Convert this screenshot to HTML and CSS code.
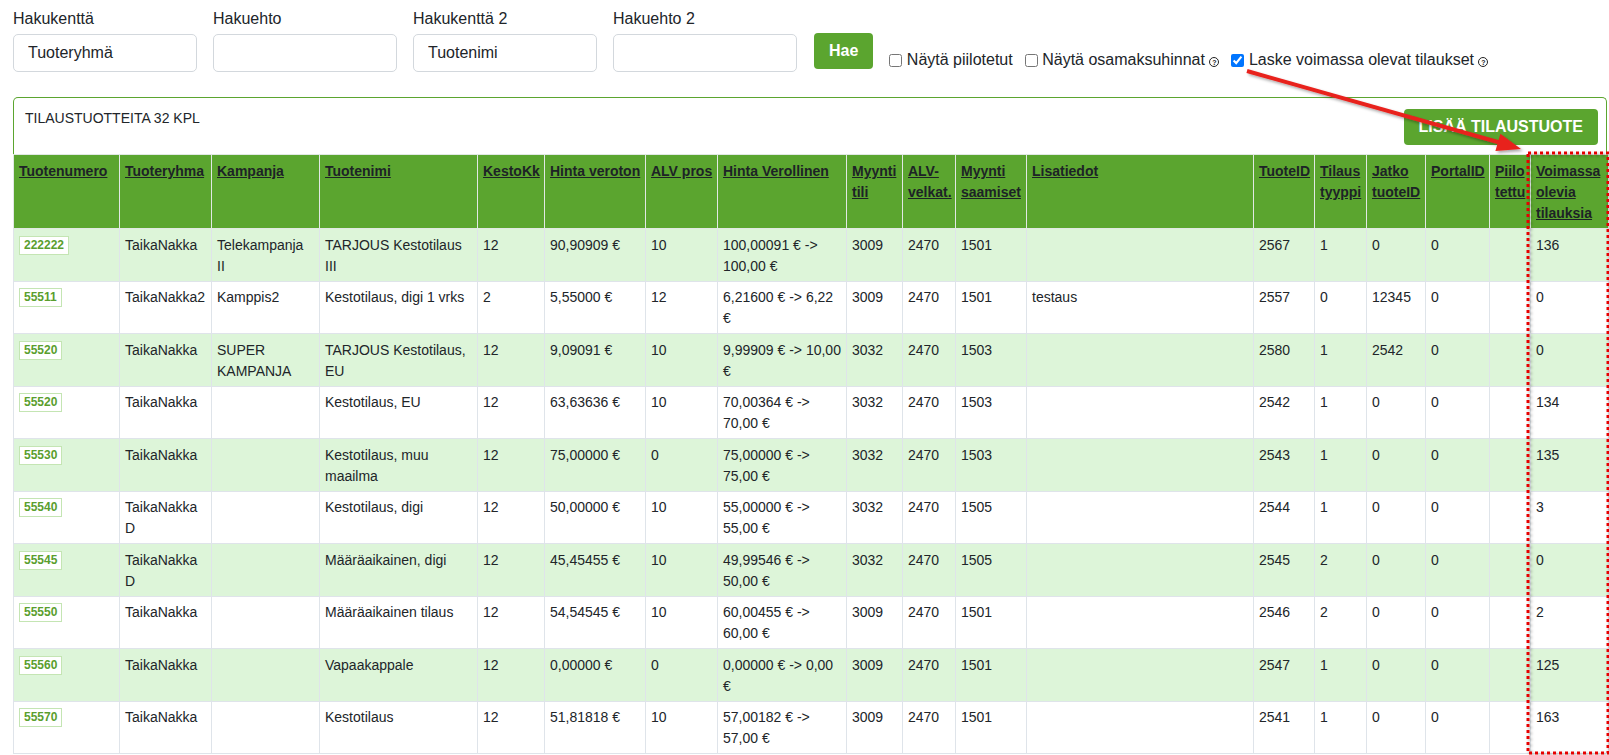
FILE: index.html
```html
<!DOCTYPE html>
<html lang="fi">
<head>
<meta charset="utf-8">
<title>Tilaustuotteet</title>
<link rel="stylesheet" href="styles.css">
</head>
<body>
<div class="page">
  <form class="search">
    <div class="field"><label>Hakukenttä</label><input type="text" value="Tuoteryhmä"></div>
    <div class="field"><label>Hakuehto</label><input type="text" value=""></div>
    <div class="field"><label>Hakukenttä 2</label><input type="text" value="Tuotenimi"></div>
    <div class="field"><label>Hakuehto 2</label><input type="text" value=""></div>
    <button type="button" class="btn btn-hae">Hae</button>
    <div class="checks">
      <label class="chk"><input type="checkbox">Näytä piilotetut</label>
      <label class="chk"><input type="checkbox">Näytä osamaksuhinnat<span class="help">?</span></label>
      <label class="chk"><input type="checkbox" checked>Laske voimassa olevat tilaukset<span class="help">?</span></label>
    </div>
  </form>

  <div class="panel">
    <div class="panel-head">
      <span class="count">TILAUSTUOTTEITA 32 KPL</span>
      <button type="button" class="btn btn-add">LISÄÄ TILAUSTUOTE</button>
    </div>
    <table class="grid">
      <colgroup>
        <col style="width:106px"><col style="width:92px"><col style="width:108px"><col style="width:158px">
        <col style="width:67px"><col style="width:101px"><col style="width:72px"><col style="width:129px">
        <col style="width:56px"><col style="width:53px"><col style="width:71px"><col style="width:227px">
        <col style="width:61px"><col style="width:52px"><col style="width:59px"><col style="width:64px">
        <col style="width:41px"><col style="width:78px">
      </colgroup>
      <thead>
        <tr>
          <th><a href="#">Tuotenumero</a></th>
          <th><a href="#">Tuoteryhma</a></th>
          <th><a href="#">Kampanja</a></th>
          <th><a href="#">Tuotenimi</a></th>
          <th><a href="#">KestoKk</a></th>
          <th><a href="#">Hinta veroton</a></th>
          <th><a href="#">ALV pros</a></th>
          <th><a href="#">Hinta Verollinen</a></th>
          <th><a href="#">Myynti<br>tili</a></th>
          <th><a href="#">ALV-<br>velkat.</a></th>
          <th><a href="#">Myynti<br>saamiset</a></th>
          <th><a href="#">Lisatiedot</a></th>
          <th><a href="#">TuoteID</a></th>
          <th><a href="#">Tilaus<br>tyyppi</a></th>
          <th><a href="#">Jatko<br>tuoteID</a></th>
          <th><a href="#">PortalID</a></th>
          <th><a href="#">Piilo<br>tettu</a></th>
          <th><a href="#">Voimassa<br>olevia<br>tilauksia</a></th>
        </tr>
      </thead>
      <tbody>
        <tr class="alt">
          <td><a class="tn" href="#">222222</a></td><td>TaikaNakka</td><td>Telekampanja II</td><td>TARJOUS Kestotilaus III</td>
          <td>12</td><td>90,90909 €</td><td>10</td><td>100,00091 € -> 100,00 €</td>
          <td>3009</td><td>2470</td><td>1501</td><td></td><td>2567</td><td>1</td><td>0</td><td>0</td><td></td><td>136</td>
        </tr>
        <tr>
          <td><a class="tn" href="#">55511</a></td><td>TaikaNakka2</td><td>Kamppis2</td><td>Kestotilaus, digi 1 vrks</td>
          <td>2</td><td>5,55000 €</td><td>12</td><td>6,21600 € -> 6,22 €</td>
          <td>3009</td><td>2470</td><td>1501</td><td>testaus</td><td>2557</td><td>0</td><td>12345</td><td>0</td><td></td><td>0</td>
        </tr>
        <tr class="alt">
          <td><a class="tn" href="#">55520</a></td><td>TaikaNakka</td><td>SUPER KAMPANJA</td><td>TARJOUS Kestotilaus, EU</td>
          <td>12</td><td>9,09091 €</td><td>10</td><td>9,99909 € -> 10,00 €</td>
          <td>3032</td><td>2470</td><td>1503</td><td></td><td>2580</td><td>1</td><td>2542</td><td>0</td><td></td><td>0</td>
        </tr>
        <tr>
          <td><a class="tn" href="#">55520</a></td><td>TaikaNakka</td><td></td><td>Kestotilaus, EU</td>
          <td>12</td><td>63,63636 €</td><td>10</td><td>70,00364 € -> 70,00 €</td>
          <td>3032</td><td>2470</td><td>1503</td><td></td><td>2542</td><td>1</td><td>0</td><td>0</td><td></td><td>134</td>
        </tr>
        <tr class="alt">
          <td><a class="tn" href="#">55530</a></td><td>TaikaNakka</td><td></td><td>Kestotilaus, muu maailma</td>
          <td>12</td><td>75,00000 €</td><td>0</td><td>75,00000 € -> 75,00 €</td>
          <td>3032</td><td>2470</td><td>1503</td><td></td><td>2543</td><td>1</td><td>0</td><td>0</td><td></td><td>135</td>
        </tr>
        <tr>
          <td><a class="tn" href="#">55540</a></td><td>TaikaNakka D</td><td></td><td>Kestotilaus, digi</td>
          <td>12</td><td>50,00000 €</td><td>10</td><td>55,00000 € -> 55,00 €</td>
          <td>3032</td><td>2470</td><td>1505</td><td></td><td>2544</td><td>1</td><td>0</td><td>0</td><td></td><td>3</td>
        </tr>
        <tr class="alt">
          <td><a class="tn" href="#">55545</a></td><td>TaikaNakka D</td><td></td><td>Määräaikainen, digi</td>
          <td>12</td><td>45,45455 €</td><td>10</td><td>49,99546 € -> 50,00 €</td>
          <td>3032</td><td>2470</td><td>1505</td><td></td><td>2545</td><td>2</td><td>0</td><td>0</td><td></td><td>0</td>
        </tr>
        <tr>
          <td><a class="tn" href="#">55550</a></td><td>TaikaNakka</td><td></td><td>Määräaikainen tilaus</td>
          <td>12</td><td>54,54545 €</td><td>10</td><td>60,00455 € -> 60,00 €</td>
          <td>3009</td><td>2470</td><td>1501</td><td></td><td>2546</td><td>2</td><td>0</td><td>0</td><td></td><td>2</td>
        </tr>
        <tr class="alt">
          <td><a class="tn" href="#">55560</a></td><td>TaikaNakka</td><td></td><td>Vapaakappale</td>
          <td>12</td><td>0,00000 €</td><td>0</td><td>0,00000 € -> 0,00 €</td>
          <td>3009</td><td>2470</td><td>1501</td><td></td><td>2547</td><td>1</td><td>0</td><td>0</td><td></td><td>125</td>
        </tr>
        <tr>
          <td><a class="tn" href="#">55570</a></td><td>TaikaNakka</td><td></td><td>Kestotilaus</td>
          <td>12</td><td>51,81818 €</td><td>10</td><td>57,00182 € -> 57,00 €</td>
          <td>3009</td><td>2470</td><td>1501</td><td></td><td>2541</td><td>1</td><td>0</td><td>0</td><td></td><td>163</td>
        </tr>
      </tbody>
    </table>
  </div>

  <svg class="annot" width="1609" height="755" viewBox="0 0 1609 755" aria-hidden="true">
    <defs>
      <filter id="sh" x="-10%" y="-10%" width="120%" height="120%">
        <feDropShadow dx="2" dy="2" stdDeviation="1.5" flood-color="#000" flood-opacity="0.35"/>
      </filter>
    </defs>
    <g filter="url(#sh)">
      <line x1="1247" y1="71" x2="1503" y2="143.5" stroke="#e8201c" stroke-width="4"/>
      <polygon points="1521,149 1495.4,151.1 1500.4,133.8" fill="#e8201c"/>
      <rect x="1528" y="153" width="80" height="600" fill="none" stroke="#e60000" stroke-width="3" stroke-dasharray="3 3"/>
    </g>
  </svg>
</div>
</body>
</html>
```

FILE: styles.css
```css
html, body {
  margin: 0;
  padding: 0;
  overflow: hidden;
  background: #fff;
}

body {
  font-family: "Liberation Sans", Arial, sans-serif;
  font-size: 16px;
  color: #212529;
}

.page {
  position: relative;
  box-sizing: border-box;
  width: 1609px;
  height: 755px;
  padding: 7px 2px 0 13px;
}

/* search form */
.search {
  display: flex;
  align-items: flex-start;
}

.field {
  width: 184px;
  margin-right: 16px;
}

.field label {
  display: block;
  line-height: 24px;
  margin-bottom: 3px;
}

.field input {
  box-sizing: border-box;
  width: 184px;
  height: 38px;
  margin: 0;
  padding: 0 14px;
  border: 1px solid #d3d8dd;
  border-radius: 5px;
  font: 16px "Liberation Sans", Arial, sans-serif;
  color: #212529;
  background: #fff;
}

.btn {
  border: 0;
  color: #fff;
  background: #5ba52f;
  font-family: "Liberation Sans", Arial, sans-serif;
  font-weight: bold;
  cursor: pointer;
}

.btn-hae {
  height: 36px;
  margin: 26px 0 0 1px;
  padding: 0 15px;
  border-radius: 4px;
  font-size: 16px;
}

.checks {
  display: flex;
  align-items: center;
  margin: 41px 0 0 12px;
  line-height: 24px;
}

.chk {
  display: inline-flex;
  align-items: center;
  margin-right: 8px;
}

.chk input {
  width: 13px;
  height: 13px;
  margin: 0 4.5px 0 4px;
}

.help {
  display: inline-flex;
  align-items: center;
  justify-content: center;
  box-sizing: border-box;
  width: 10px;
  height: 10px;
  margin: 4px 0 0 4.5px;
  border: 1.2px solid #222;
  border-radius: 50%;
  font-size: 7px;
  font-weight: bold;
  line-height: 1;
  color: #222;
}

/* panel */
.panel {
  margin-top: 25px;
  border: 1px solid #5ba52f;
  border-bottom: 0;
  border-radius: 5px 5px 0 0;
}

.panel-head {
  display: flex;
  justify-content: space-between;
  align-items: flex-start;
  padding: 11px 8px 9px 11px;
}

.count {
  margin-top: -1px;
  font-size: 14px;
  line-height: 21px;
}

.btn-add {
  height: 36px;
  padding: 0 15px;
  border-radius: 4px;
  font-size: 16px;
}

/* table */
.grid {
  width: 1595px;
  margin-left: -1px;
  border-collapse: collapse;
  table-layout: fixed;
  font-size: 14px;
  line-height: 21px;
}

.grid th {
  padding: 6px 4px 4px 5px;
  background: #5ba52f;
  border: 1px solid #e1e8e4;
  text-align: left;
  vertical-align: top;
  white-space: nowrap;
  font-weight: bold;
}

.grid th a {
  color: #1d2326;
  text-decoration: underline;
}

.grid td {
  padding: 5.5px 4px 4px 5px;
  border: 1px solid #dfe4ea;
  vertical-align: top;
  background: #fff;
}

.grid tr.alt td {
  background: #ddf5d9;
}

.tn {
  display: inline-block;
  vertical-align: top;
  margin-top: 1px;
  padding: 0 4px;
  border: 1px solid #c4e5b3;
  background: #fff;
  color: #5a9e2e;
  font-size: 12px;
  font-weight: bold;
  line-height: 17px;
  text-decoration: none;
}

/* annotation overlay */
.annot {
  position: absolute;
  left: 0;
  top: 0;
  pointer-events: none;
  z-index: 10;
}
```
